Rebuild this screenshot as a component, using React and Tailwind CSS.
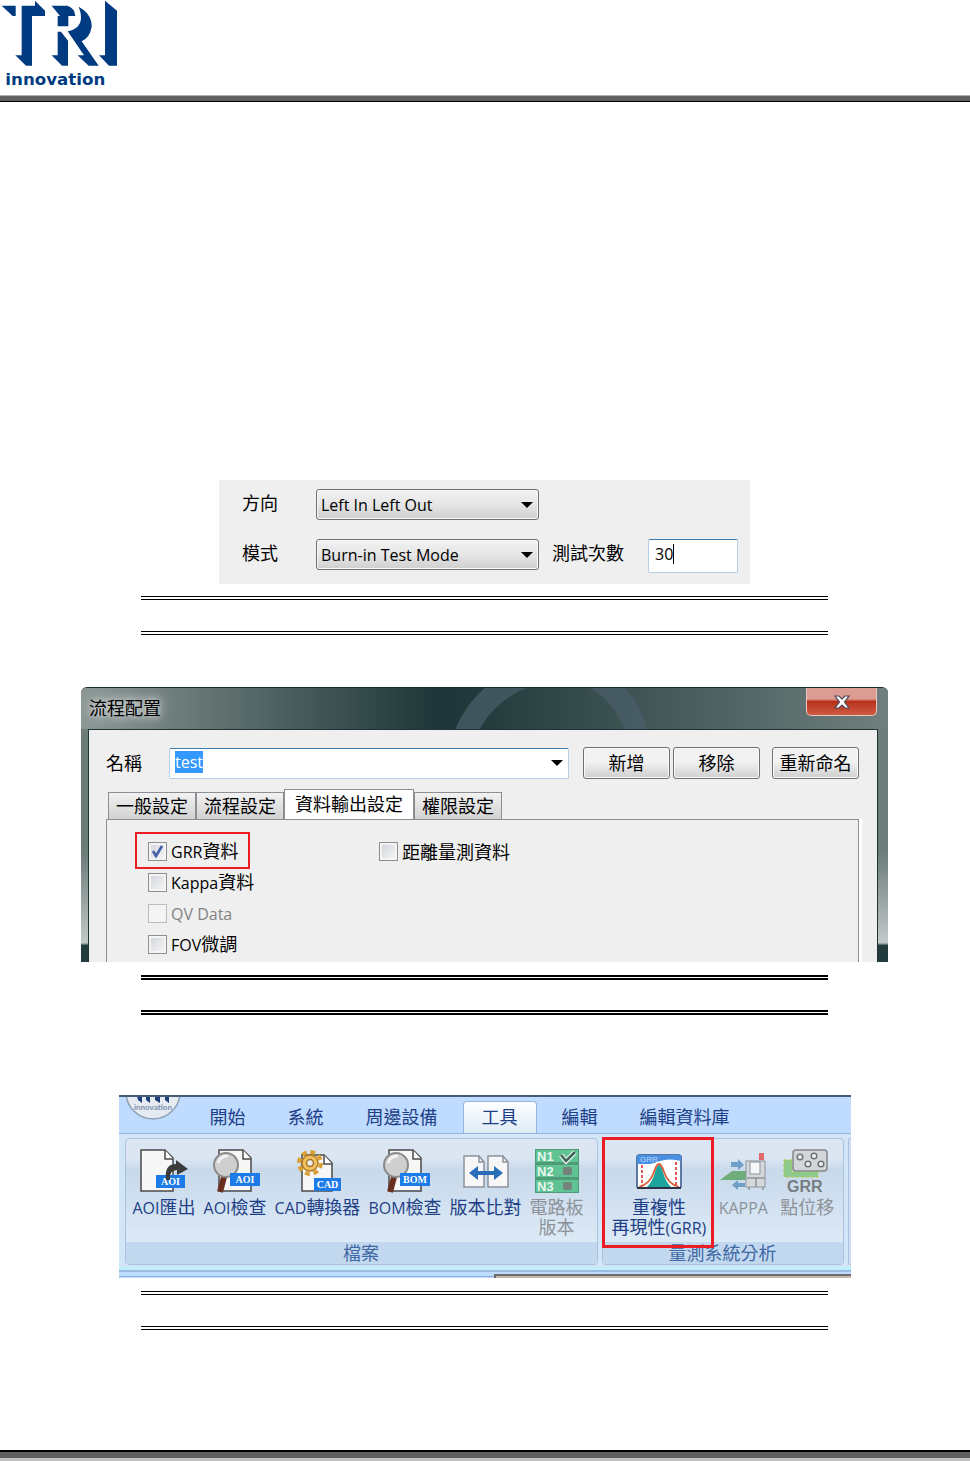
import React, { useEffect, useRef } from 'react';
import { clsx } from 'clsx';

const ribbonTabs = ['開始', '系統', '周邊設備', '工具', '編輯', '編輯資料庫'];

const dialogTabs = ['一般設定', '流程設定', '資料輸出設定', '權限設定'];

const Logo = () => (
  <svg viewBox="0 0 360 270" className="block w-[120px] h-[90px]" fill="#003a80" role="img" aria-label="TRI innovation">
    <path d="M5 17H47V48H38Z" />
    <path d="M65 17H105V2L135 32V48H96V197H78L46 166H65Z" />
    <path d="M155 17H202Q224 24 226 48H205V79H173V48H180Z" />
    <path d="M173 95H183L204 122V197H186L155 166H173Z" />
    <path d="M236 20Q276 42 275 80Q270 112 245 124L296 197H266L233 166H252L203 94Q260 82 236 20Z" />
    <path d="M315 2L351 32V197H327L297 166H315Z" />
    <text x="16" y="254" fontSize="50" fontWeight="700" fontFamily="DejaVu Sans, sans-serif">innovation</text>
  </svg>
);

const Arrow = () => (
  <svg viewBox="0 0 12 6" className="w-3 h-[6px] pointer-events-none absolute right-[6px] top-1/2 -translate-y-1/2">
    <path d="M0 0H12L6 6Z" fill="#000" />
  </svg>
);

const Select = ({ id, value }) => (
  <div className="relative w-[223px]">
    <select
      id={id}
      defaultValue={value}
      className="block w-full h-[31px] appearance-none rounded-[3px] border border-[#707070] bg-linear-to-b from-[#f2f2f2] via-[#e6e6e6] to-[#cfcfcf] pl-1 pr-6 text-base leading-7 shadow-[inset_0_0_0_1px_#f8f8f8]"
    >
      <option>{value}</option>
    </select>
    <Arrow />
  </div>
);

const ModePanel = () => (
  <section className="w-full max-w-[531px] bg-[#efefef] pl-[23px] pt-[9px] pb-[11px] flex flex-col gap-[19px]">
    <div className="flex items-start">
      <label htmlFor="direction" className="w-[74px] leading-7">方向</label>
      <Select id="direction" value="Left In Left Out" />
    </div>
    <div className="flex items-start">
      <label htmlFor="mode" className="w-[74px] leading-7">模式</label>
      <Select id="mode" value="Burn-in Test Mode" />
      <label htmlFor="count" className="ml-[13px] w-[96px] leading-7">測試次數</label>
      <div className="relative">
        <input
          id="count"
          defaultValue="30"
          className="block w-[90px] h-[34px] rounded-[2px] border border-[#b5cfe7] border-t-[#3d7bad] bg-white px-[6px] pb-1 text-base"
        />
        <span className="absolute left-[25px] top-[5px] h-5 w-px bg-black" />
      </div>
    </div>
  </section>
);

const Check = ({ label, checked, disabled }) => (
  <label className={clsx('flex h-[31px] items-center gap-1', disabled && 'text-[#838383]')}>
    <span className="relative block size-[19px]">
      <input
        type="checkbox"
        defaultChecked={checked}
        disabled={disabled}
        className="peer block size-[19px] appearance-none border border-[#8e8f8f] bg-linear-to-br from-[#cfd3da] to-[#f8f8f8] shadow-[inset_0_0_0_2px_#f4f4f4] disabled:border-[#bcbcbc] disabled:from-[#f0f0f0]"
      />
      <svg viewBox="0 0 19 19" className="pointer-events-none absolute inset-0 hidden peer-checked:block">
        <path d="M5 9L8 14L14 4" fill="none" stroke="#4360a8" strokeWidth="2.6" />
      </svg>
    </span>
    <span>{label}</span>
  </label>
);

const DialogButton = ({ children }) => (
  <button
    type="button"
    className="w-[87px] h-8 rounded-[3px] border border-[#707070] bg-linear-to-b from-[#f2f2f2] from-45% to-[#cfcfcf] shadow-[inset_0_0_0_1px_#fafafa]"
  >
    {children}
  </button>
);

const ConfigDialog = () => {
  const nameRef = useRef(null);

  useEffect(() => {
    nameRef.current.focus();
    nameRef.current.select();
  }, []);

  return (
    <section className="w-full max-w-[807px] rounded-t-[6px] border-t border-[#1b2f30] bg-linear-to-b from-[#6b7c79] from-60% via-[#c3c9c9] via-93% to-[#223c3d] to-94%">
      <header className="relative h-[41px] overflow-hidden rounded-t-[5px] bg-linear-to-r from-[#8c9896] via-[#1d3537] via-45% to-[#6f807e] pl-2 pt-1">
        <svg viewBox="0 0 240 41" className="absolute left-[366px] top-0 w-60 h-[41px]" fill="none">
          <path d="M18 46Q36 4 80 -12M144 -12Q180 6 190 46" stroke="#4a5d69" strokeWidth="22" opacity="0.75" />
        </svg>
        <h2 className="relative leading-8 [text-shadow:0_0_6px_#ffffffcc,0_0_14px_#ffffffcc]">流程配置</h2>
        <button
          type="button"
          aria-label="關閉"
          className="absolute right-[11px] top-0 flex h-7 w-[71px] items-center justify-center rounded-b-[5px] border border-t-0 border-[#e7c8c4] bg-linear-to-b from-[#dc9c92] from-40% via-[#b8301a] via-50% to-[#cf5a42]"
        >
          <svg viewBox="0 0 18 16" className="w-[18px] h-4">
            <path d="M2 2H6L9 5L12 2H16L11.500 8L16 14H12L9 11L6 14H2L6.500 8Z" fill="#fff" stroke="#4c4858" strokeWidth="1.200" />
          </svg>
        </button>
      </header>
      <div className="ml-[7px] mr-[10px] border-x border-t border-[#1f3435] bg-[#efefef] pl-[17px] pr-[18px] pt-[17px] shadow-[0_-1px_0_#9aa9a8]">
        <div className="flex items-center">
          <label htmlFor="flow-name" className="w-[63px]">名稱</label>
          <div className="relative w-[400px]">
            <input
              ref={nameRef}
              id="flow-name"
              defaultValue="test"
              className="block w-full h-[31px] rounded-[2px] border border-[#b5cfe7] border-t-[#3d7bad] bg-white px-[5px] pb-[2px] text-base outline-none selection:bg-[#3399ff] selection:text-white"
            />
            <Arrow />
          </div>
          <div className="ml-[14px] flex gap-[3px]">
            <DialogButton>新增</DialogButton>
            <DialogButton>移除</DialogButton>
          </div>
          <div className="ml-3">
            <DialogButton>重新命名</DialogButton>
          </div>
        </div>
        <div className="mt-[10px] flex items-end pl-[2px]" role="tablist">
          {dialogTabs.map((tab) => (
            <button
              key={tab}
              type="button"
              role="tab"
              aria-selected={tab === '資料輸出設定'}
              className={clsx(
                'border border-b-0 border-[#8c8e94]',
                tab === '資料輸出設定'
                  ? 'h-[30px] bg-white px-[10px] pb-[2px]'
                  : 'h-[27px] bg-linear-to-b from-[#f2f2f2] to-[#d2d2d2] px-[7px] leading-6'
              )}
            >
              {tab}
            </button>
          ))}
        </div>
        <div className="grid h-[143px] grid-cols-[231px_1fr] content-start border border-b-0 border-[#8c8e94] pl-[41px] pt-4 shadow-[3px_0_0_#fff]">
          <div className="relative">
            <Check label={<><span className="text-base">GRR</span>資料</>} checked />
            <Check label={<><span className="text-base">Kappa</span>資料</>} />
            <Check label={<span className="text-base">QV Data</span>} disabled />
            <Check label={<><span className="text-base">FOV</span>微調</>} />
            <span className="absolute -left-[13px] -top-[4px] h-[37px] w-[115px] border-2 border-[#ed1c24]" />
          </div>
          <Check label="距離量測資料" />
        </div>
      </div>
    </section>
  );
};

const PageShape = () => (
  <>
    <path d="M9 3H33L41 11V44H9Z" fill="#f7f7f7" stroke="#4a4a4a" strokeWidth="1.500" />
    <path d="M33 3V12H41" fill="#fff" stroke="#4a4a4a" strokeWidth="1.500" />
  </>
);

const Tag = ({ x, y, w, children }) => (
  <>
    <rect x={x} y={y} width={w} height="13" fill="#1c7be6" />
    <text x={x + w / 2} y={y + 10} textAnchor="middle" fontSize="10" fontWeight="700" fill="#fff" fontFamily="Liberation Serif, serif">
      {children}
    </text>
  </>
);

const Magnifier = () => (
  <>
    <path d="M14 30L10 45" stroke="#6b2f22" strokeWidth="6" />
    <circle cx="16" cy="18" r="12" fill="#cfcfcf" stroke="#8b8b8b" strokeWidth="2" />
    <path d="M8 16Q10 9 18 9" fill="none" stroke="#f2f2f2" strokeWidth="3" />
  </>
);

const ExportIcon = () => (
  <svg viewBox="0 0 50 48" className="w-[50px] h-12">
    <g transform="translate(-7 0)"><PageShape /></g>
    <Tag x={17} y={28} w={29}>AOI</Tag>
    <path d="M27 33Q25 17 37 17V13L49 22L38 28V23Q30 23 31 33Z" fill="#3c3c3c" />
  </svg>
);

const InspectIcon = ({ tag }) => (
  <svg viewBox="0 0 50 48" className="w-[50px] h-12">
    <PageShape />
    <Magnifier />
    <Tag x={20} y={26} w={30}>{tag}</Tag>
  </svg>
);

const CadIcon = () => (
  <svg viewBox="0 0 50 48" className="w-[50px] h-12">
    <path d="M10 8H32L40 16V44H10Z" fill="#f7f7f7" stroke="#4a4a4a" strokeWidth="1.500" />
    <path d="M32 8V17H40" fill="#fff" stroke="#4a4a4a" strokeWidth="1.500" />
    <circle cx="18" cy="16" r="11" fill="none" stroke="#d9a036" strokeWidth="4" strokeDasharray="5 3.640" />
    <circle cx="18" cy="16" r="8" fill="#f0c060" stroke="#b77b22" strokeWidth="1.500" />
    <circle cx="18" cy="16" r="3.500" fill="#e9edf2" stroke="#a87425" strokeWidth="1.500" />
    <Tag x={22} y={31} w={27}>CAD</Tag>
  </svg>
);

const CompareIcon = () => (
  <svg viewBox="0 0 50 48" className="w-[50px] h-12">
    <path d="M3 9H18L23 15V40H3ZM27 9H42L47 15V40H27Z" fill="#f7f7f7" stroke="#8b929c" strokeWidth="1.500" />
    <path d="M18 9V15H23M42 9V15H47" fill="none" stroke="#8b929c" strokeWidth="1.500" />
    <path d="M8 26L17 19V24H33V19L42 26L33 33V28H17V33Z" fill="#2a6db8" />
  </svg>
);

const BoardIcon = () => (
  <svg viewBox="0 0 50 48" className="w-[50px] h-12">
    <rect x="3" y="2" width="44" height="44" fill="#4f9b78" />
    {[3, 18, 33].map((y, i) => (
      <g key={y}>
        <rect x="4" y={y} width="42" height="12" fill="#5fc393" />
        <text x="5" y={y + 11} fontSize="13" fontWeight="700" fill="#e8f6ee" fontFamily="Liberation Sans, sans-serif">{`N${i + 1}`}</text>
        {i > 0 && <rect x="31" y={y + 2} width="9" height="8" rx="2" fill="#75837c" />}
      </g>
    ))}
    <path d="M29 8L34 14L43 5" fill="none" stroke="#e8f0ec" strokeWidth="5" />
    <path d="M29 8L34 14L43 5" fill="none" stroke="#3c6756" strokeWidth="2.500" />
  </svg>
);

const GrrIcon = () => (
  <svg viewBox="0 0 50 48" className="w-[50px] h-12">
    <rect x="3" y="8" width="44" height="33" rx="2" fill="#fff" stroke="#31528c" strokeWidth="1.500" />
    <path d="M3 8H47V14Q34 10 20 16L16 17H3Z" fill="#4a90e2" />
    <text x="6" y="15" fontSize="8" fill="#b8d6fa" fontFamily="Liberation Sans, sans-serif">GRR</text>
    <path d="M13 40Q19 34 21 25Q25 11 29 25Q31 34 37 40Z" fill="#1ca39b" />
    <path d="M5 40Q16 37 20 25Q25 9 30 25Q34 37 45 40" fill="none" stroke="#d9603a" strokeWidth="1.800" />
    <path d="M8 18V39M42 15V39" stroke="#d22" strokeWidth="1.500" strokeDasharray="3 2" />
    <path d="M3 41H47" stroke="#2c3448" strokeWidth="2" />
  </svg>
);

const KappaIcon = () => (
  <svg viewBox="0 0 50 48" className="w-[50px] h-12">
    <path d="M2 33L14 24H29V33Z" fill="#6fae7b" />
    <path d="M13 15H20V12L26 18L20 23V20H13ZM27 36H20V33L14 38L20 43V40H27Z" fill="#6f9fc6" />
    <rect x="28" y="14" width="19" height="26" fill="#d5d9dc" stroke="#8c949a" />
    <rect x="32" y="15" width="10" height="12" fill="#f5f7f8" stroke="#8c949a" />
    <path d="M29 31H47M38 31V40M31 40V43M45 40V43" stroke="#8c949a" strokeWidth="1.500" />
    <rect x="41" y="6" width="5" height="7" fill="#e06a6a" />
  </svg>
);

const ShiftIcon = () => (
  <svg viewBox="0 0 50 48" className="w-[50px] h-12">
    <path d="M2 13H10V25H36V30H2Z" fill="#8bc98d" stroke="#b5c83d" strokeDasharray="3 2" />
    <rect x="11" y="3" width="34" height="21" rx="3" fill="#d3d6d8" stroke="#84888b" strokeWidth="1.500" />
    <g fill="#f0f1f2" stroke="#6f7376" strokeWidth="1.500">
      <circle cx="18" cy="10" r="2.800" />
      <circle cx="32" cy="9" r="2.800" />
      <circle cx="26" cy="17" r="2.800" />
      <circle cx="39" cy="17" r="2.800" />
    </g>
    <text x="5" y="45" fontSize="16" fontWeight="700" fill="#777d82" fontFamily="Liberation Sans, sans-serif">GRR</text>
  </svg>
);

const RibbonItem = ({ icon, latin, lines, disabled, marked }) => (
  <button
    type="button"
    disabled={disabled}
    className="relative flex flex-col items-center leading-5 whitespace-nowrap text-[#1e3f86] disabled:text-[#8d9298]"
  >
    {icon}
    <span className="mt-[2px] block">
      {latin && <span className="text-base leading-5">{latin}</span>}
      {lines[0]}
    </span>
    {lines[1] && (
      <span className="block">
        {lines[1]}
        {marked && <span className="text-base leading-5">(GRR)</span>}
      </span>
    )}
    {marked && <span className="absolute -left-[10px] -right-[8px] -top-[10px] h-[111px] border-3 border-[#ed1c24]" />}
  </button>
);

const RibbonGroup = ({ title, className, children }) => (
  <div className={clsx('flex flex-col rounded-[4px] border border-[#a9c3de] bg-linear-to-b from-[#dbe6f2] from-15% via-[#c8d9eb] via-25% to-[#dce9f6] to-80%', className)}>
    <div className="flex h-[103px] items-start pt-2">{children}</div>
    <div className="rounded-b-[3px] bg-[#c2d8ee] text-center leading-[22px] text-[#3f68a4]">{title}</div>
  </div>
);

const Ribbon = () => (
  <section className="relative w-full max-w-[732px] overflow-hidden border-t-2 border-[#475c78] bg-[#bfdbff]">
    <svg viewBox="0 0 70 24" className="absolute left-0 -top-[1px] w-[70px] h-6">
      <circle cx="34" cy="-4" r="27" fill="#e6ebf1" stroke="#8fa0b3" strokeWidth="1.500" />
      <path d="M18 0H23V7L19 4ZM27 0H31V7L27 4ZM36 0H41V7L36 4ZM46 0H50V7L46 4Z" fill="#1c3f7a" />
      <text x="34" y="14" textAnchor="middle" fontSize="8" fontWeight="700" fill="#7d90ad" fontFamily="Lato, sans-serif">innovation</text>
    </svg>
    <nav className="flex h-9 items-end pl-[70px]">
      {ribbonTabs.map((tab) => (
        <button
          key={tab}
          type="button"
          className={clsx(
            'mx-1 h-8 rounded-t-[4px] border border-b-0 pb-[2px] whitespace-nowrap text-[#1e3f86]',
            tab === '工具' ? 'border-[#93b6e0] bg-linear-to-b from-white to-[#dfebf7] px-[18px]' : 'border-transparent px-4'
          )}
        >
          {tab}
        </button>
      ))}
    </nav>
    <div className="flex gap-1 border-b-3 border-t border-b-[#bdf0fa] border-t-[#93b6e0] bg-[#d3e6f8] pl-[6px] pt-1 pb-[2px]">
      <RibbonGroup title="檔案" className="w-[473px]">
        <div className="flex w-full gap-2 pl-[7px]">
          <RibbonItem icon={<ExportIcon />} latin="AOI" lines={['匯出']} />
          <RibbonItem icon={<InspectIcon tag="AOI" />} latin="AOI" lines={['檢查']} />
          <RibbonItem icon={<CadIcon />} latin="CAD" lines={['轉換器']} />
          <RibbonItem icon={<InspectIcon tag="BOM" />} latin="BOM" lines={['檢查']} />
          <RibbonItem icon={<CompareIcon />} lines={['版本比對']} />
          <RibbonItem icon={<BoardIcon />} lines={['電路板', '版本']} disabled />
        </div>
      </RibbonGroup>
      <RibbonGroup title="量測系統分析" className="w-[242px]">
        <div className="flex w-full gap-3 pl-[9px]">
          <RibbonItem icon={<GrrIcon />} lines={['重複性', '再現性']} marked />
          <RibbonItem icon={<KappaIcon />} latin="KAPPA" lines={[]} disabled />
          <RibbonItem icon={<ShiftIcon />} lines={['點位移']} disabled />
        </div>
      </RibbonGroup>
      <div className="grow rounded-l-[4px] border border-r-0 border-[#a9c3de] bg-[#d0e0f0]" />
    </div>
    <div className="flex h-2 items-end border-t-2 border-[#9dbce0]">
      <div className="h-[2px] w-[375px] border-t border-[#8fb0d8]" />
      <div className="h-1 grow border-l-2 border-t-2 border-[#6d6d6d] bg-[#c9b9a8]" />
    </div>
  </section>
);

const Caption = ({ className }) => (
  <div className={clsx('w-full max-w-[687px] border-double border-black', className)} />
);

const App = () => (
  <div className="flex min-h-screen flex-col bg-white font-['Open_Sans','Noto_Sans_CJK_TC',sans-serif] text-lg leading-6 text-black">
    <header>
      <div className="h-[95px]">
        <Logo />
      </div>
      <div className="h-[7px] border-t border-b border-t-[#b0b0b0] border-b-black bg-[#606060]" />
    </header>
    <main className="flex grow flex-col items-center pr-px pt-[378px]">
      <ModePanel />
      <Caption className="mt-3 h-[39px] border-y-4" />
      <div className="mt-[52px] flex w-full justify-center">
        <ConfigDialog />
      </div>
      <Caption className="mt-[13px] h-10 border-y-5" />
      <div className="mt-20 flex w-full justify-center">
        <Ribbon />
      </div>
      <Caption className="mt-[13px] h-[39px] border-y-4" />
    </main>
    <footer className="h-[11px] border-t-2 border-b-3 border-t-black border-b-[#c0c0c0] bg-[#606060]" />
  </div>
);

export default App;
